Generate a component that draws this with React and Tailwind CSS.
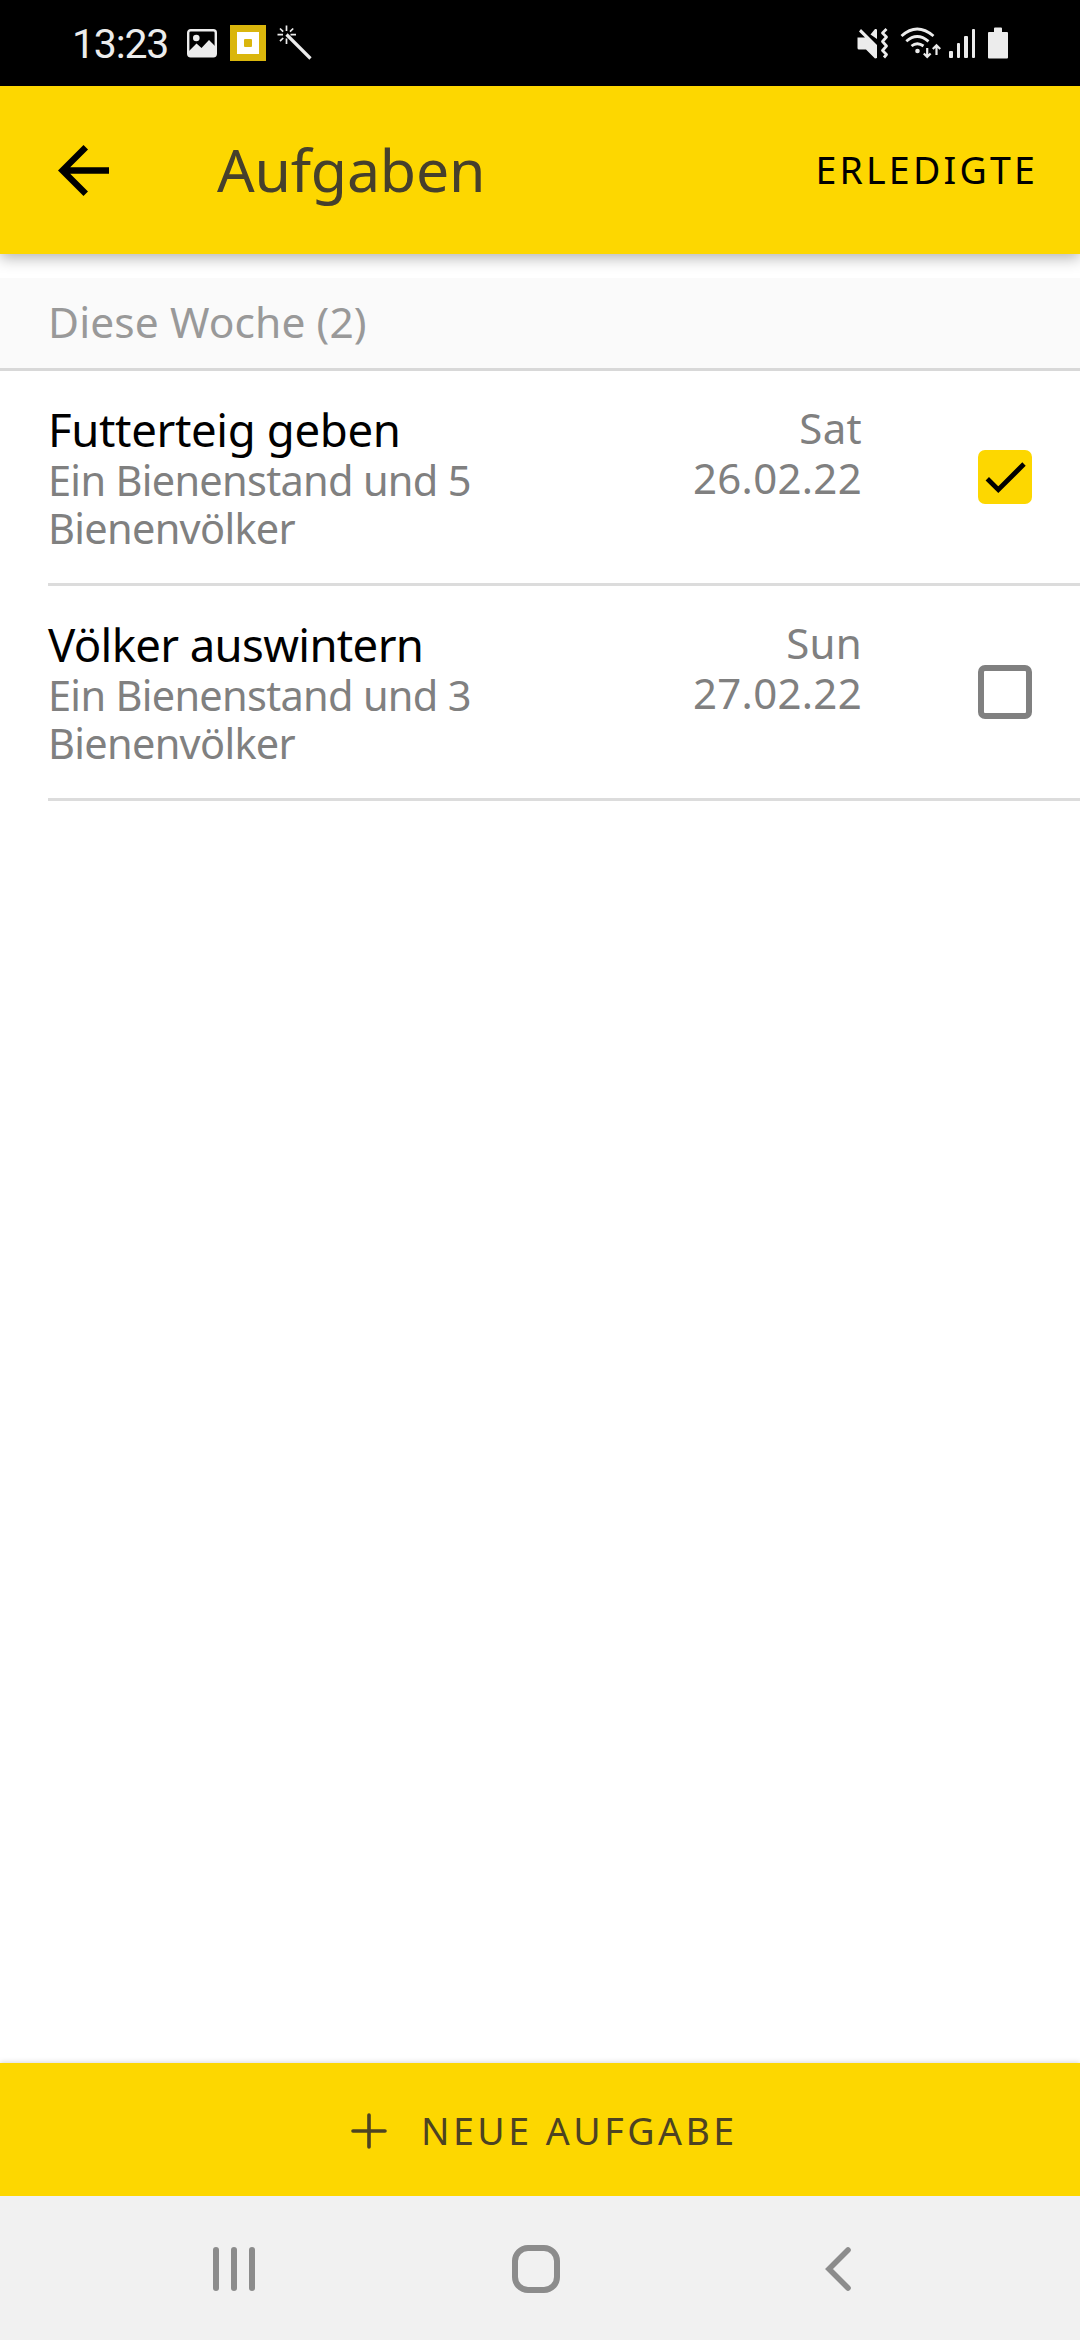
import React, { useState } from "react";

const initialTasks = [
  {
    id: 1,
    title: "Futterteig geben",
    titleTracking: "tracking-[-0.35px]",
    lines: ["Ein Bienenstand und 5", "Bienenvölker"],
    day: "Sat",
    date: "26.02.22",
    done: true,
  },
  {
    id: 2,
    title: "Völker auswintern",
    titleTracking: "tracking-[-0.65px]",
    lines: ["Ein Bienenstand und 3", "Bienenvölker"],
    day: "Sun",
    date: "27.02.22",
    done: false,
  },
];

const StatusBar = () => {
  return (
    <div className="h-[86px] shrink-0 bg-black px-[72px] flex items-center justify-between">
      <div className="flex items-center h-full">
        <span className="w-[115px] pt-px font-[Roboto,sans-serif] text-[41px] leading-[58px] tracking-[-1.2px] text-[#ececec]">
          13:23
        </span>
        {/* Gallery */}
        <svg className="w-[30px] h-[30px]" viewBox="0 0 30 30" fill="none">
          <rect x="1.2" y="2.2" width="27.6" height="26" rx="2.5" stroke="#ececec" strokeWidth="2.4" />
          <circle cx="9.3" cy="10" r="3.3" fill="#ececec" />
          <path d="M2 23l7.5-7.5 5 4.5 7.5-8 7 7V28H2z" fill="#ececec" />
        </svg>
        {/* App badge */}
        <div className="ml-[13px] w-9 h-9 bg-[#dab60c] flex items-center justify-center">
          <div className="w-[22px] h-[22px] bg-white flex items-center justify-center">
            <div className="w-2 h-2 rounded-[1px] bg-[#dab60c]"></div>
          </div>
        </div>
        {/* Magic wand */}
        <svg className="ml-[11px] w-9 h-9" viewBox="0 0 36 36" fill="none" stroke="#ececec">
          <path d="M9.5 9.5L33.5 33.5" strokeWidth="3.2" />
          <path
            d="M9.5 0.5V6M9.5 13.5v5.5M0.5 9.7H6M13.5 9.7h5.5M3 3.5l3.2 3.2M16.2 3.5l-3.2 3.2M3 16.2l3.2-3.2"
            strokeWidth="1.7"
          />
        </svg>
      </div>
      <div className="flex items-center h-full">
        {/* Muted, vibrating */}
        <svg className="w-[32px] h-[32px]" viewBox="0 0 32 32">
          <path
            d="M0.5 10.500h7.500l-6-6 2-2.500L20 18v13l-2 .5-9-9H2q-1.500 0-1.500-1.500zM13.500 7.500L18 2q2-.5 2 1v9z"
            fill="#ececec"
          />
          <path
            d="M29.500 2l-4 4 4 4-4 4.500 4 4.500-4 4.500 4 4-2.500 3"
            fill="none"
            stroke="#ececec"
            strokeWidth="2.8"
            strokeLinejoin="round"
          />
        </svg>
        {/* Wifi with traffic arrows */}
        <svg className="ml-[11px] w-[42px] h-[32px]" viewBox="0 0 42 32" fill="none" stroke="#ececec">
          <path d="M1.500 9q15.500-14 32 0M6.300 14.300q10.700-9.500 22.200 0M11.500 19q5.700-4.500 12 0" strokeWidth="2.8" />
          <circle cx="17.500" cy="24" r="2.300" fill="#ececec" stroke="none" />
          <path d="M27.200 21v9M23.800 26.500l3.400 3.500 3.400-3.500M36.500 28v-9M32.800 22l3.700-3.700 3.700 3.700" strokeWidth="2.2" />
        </svg>
        {/* Signal */}
        <div className="ml-[7px] flex items-end gap-[4px] h-[30px]">
          <div className="w-[3.5px] h-[7px] rounded-[1px] bg-[#ececec]"></div>
          <div className="w-[3.5px] h-[15px] rounded-[1px] bg-[#ececec]"></div>
          <div className="w-[3.5px] h-[22px] rounded-[1px] bg-[#ececec]"></div>
          <div className="w-[3.5px] h-[29px] rounded-[1px] bg-[#ececec]"></div>
        </div>
        {/* Battery */}
        <svg className="ml-[13px] w-[20px] h-[32px]" viewBox="0 0 20 32">
          <path
            d="M6 1.500q0-1 1-1h6q1 0 1 1V5h5q1 0 1 1v24.500q0 1-1 1H1q-1 0-1-1V6q0-1 1-1h5z"
            fill="#ececec"
          />
        </svg>
      </div>
    </div>
  );
};

const Header = () => {
  return (
    <header className="relative h-[168px] shrink-0 bg-[#fdd700] pl-[58px] pr-[42px] flex items-center shadow-[0_4px_14px_rgba(0,0,0,0.3)]">
      <button>
        <svg className="w-[51px] h-[51px]" viewBox="4 4 16 16" fill="#000">
          <path d="M20 11H7.83l5.59-5.59L12 4l-8 8 8 8 1.41-1.41L7.83 13H20v-2z" />
        </svg>
      </button>
      <h1 className="ml-[108px] pb-[3px] grow text-[59px] leading-[80px] tracking-[-0.2px] text-[#46402c]">
        Aufgaben
      </h1>
      <button className="text-[37.5px] leading-[54px] tracking-[3.2px] text-black">
        ERLEDIGTE
      </button>
    </header>
  );
};

const Checkbox = ({ checked, onClick }) => {
  return checked ? (
    <button onClick={onClick} className="w-[54px] h-[54px] rounded-[7px] bg-[#fdd700]">
      <svg className="w-[54px] h-[54px]" viewBox="0 0 54 54" fill="none">
        <path d="M9.3 28.7l11 11L46 14" stroke="#000" strokeWidth="4.8" />
      </svg>
    </button>
  ) : (
    <button
      onClick={onClick}
      className="w-[54px] h-[54px] rounded-[7px] border-[6px] border-[#808080]"
    ></button>
  );
};

const TaskRow = ({ task, onToggle }) => {
  return (
    <div className="ml-12 h-[215px] pr-12 border-b-[3px] border-[#dcdcdc] flex">
      <div className="grow pt-[31px]">
        <h3 className={`text-[45.5px] leading-[54px] text-black ${task.titleTracking}`}>
          {task.title}
        </h3>
        {task.lines.map((line) => (
          <p
            key={line}
            className="text-[41.5px] leading-[48px] tracking-[-0.7px] text-[#808080]"
          >
            {line}
          </p>
        ))}
      </div>
      <div className="pt-[32px] w-[200px] mr-[116px] text-right text-[42px] leading-[50px] tracking-[0.3px] text-[#808080]">
        <p>{task.day}</p>
        <p>{task.date}</p>
      </div>
      <div className="flex items-center">
        <Checkbox checked={task.done} onClick={() => onToggle(task.id)} />
      </div>
    </div>
  );
};

const NavigationBar = () => {
  return (
    <nav className="h-36 shrink-0 bg-[#f1f1f1] pt-[2px] pl-[213px] pr-[228px] flex items-center">
      <div className="flex gap-3">
        <div className="w-[6px] h-[44px] rounded-full bg-[#8c8c8c]"></div>
        <div className="w-[6px] h-[44px] rounded-full bg-[#8c8c8c]"></div>
        <div className="w-[6px] h-[44px] rounded-full bg-[#8c8c8c]"></div>
      </div>
      <div className="ml-[257px] w-[48px] h-[48px] rounded-[16px] border-[6px] border-[#8c8c8c]"></div>
      <svg className="ml-auto w-[28px] h-[46px]" viewBox="0 0 28 46" fill="none">
        <path d="M24 4L5 23l19 19" stroke="#8c8c8c" strokeWidth="5.6" strokeLinecap="round" />
      </svg>
    </nav>
  );
};

const App = () => {
  const [tasks, setTasks] = useState(initialTasks);

  const toggleTask = (id) => {
    setTasks((prev) =>
      prev.map((task) => (task.id === id ? { ...task, done: !task.done } : task))
    );
  };

  return (
    <div className="w-[1080px] h-[2340px] bg-white flex flex-col overflow-hidden font-['Noto_Sans',sans-serif] whitespace-nowrap">
      <StatusBar />
      <Header />

      {/* Task list */}
      <main className="grow pt-6">
        <h2 className="h-[93px] pl-12 bg-[#fafafa] border-b-[3px] border-[#d8d8d8] text-[42.5px] leading-[87px] tracking-[0.1px] text-[#999999]">
          Diese Woche (2)
        </h2>
        {tasks.map((task) => (
          <TaskRow key={task.id} task={task} onToggle={toggleTask} />
        ))}
      </main>

      {/* New task */}
      <button className="h-[133px] shrink-0 bg-[#fdd700] pt-[2px] pl-[351px] flex items-center text-[#4d4322] shadow-[0_-1px_5px_rgba(0,0,0,0.15)]">
        <svg className="w-[36px] h-[36px]" viewBox="0 0 36 36" fill="none">
          <path d="M18 2v32M2 18h32" stroke="currentColor" strokeWidth="3.6" strokeLinecap="round" />
        </svg>
        <span className="ml-[34px] text-[37.5px] leading-[54px] tracking-[3.5px]">
          NEUE AUFGABE
        </span>
      </button>

      <NavigationBar />
    </div>
  );
};

export default App;
